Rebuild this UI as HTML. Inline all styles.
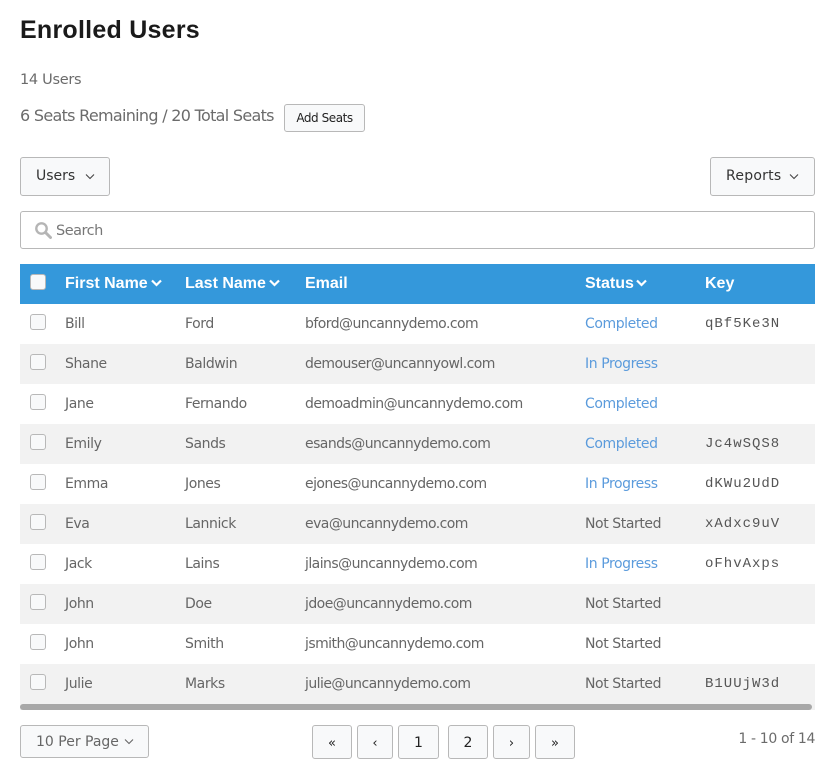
<!DOCTYPE html>
<html><head><meta charset="utf-8"><style>
html,body{margin:0;padding:0;background:#fff;}
body{position:relative;width:833px;height:775px;overflow:hidden;font-family:"DejaVu Sans","Liberation Sans",sans-serif;font-size:14px;color:#666;}
.a{position:absolute;white-space:nowrap;}
.t{position:absolute;white-space:nowrap;line-height:20px;letter-spacing:-.42px;font-size:14px;margin-top:1px;}
.e{letter-spacing:-.55px;}
.b{position:absolute;box-sizing:border-box;background:#f8f9fa;border:1px solid #b8b8b8;border-radius:3px;color:#222;text-align:center;white-space:nowrap;}
.r{position:absolute;left:20px;width:795px;height:40px;}
.g{background:#f2f2f2;}
.c{position:absolute;left:30px;width:16px;height:16px;box-sizing:border-box;background:#f8f9fa;border:1px solid #b8b8b8;border-radius:3px;}
.l{color:#5b9bdc;}
.k{font-family:"Liberation Mono",monospace;font-size:14px;letter-spacing:1px;color:#555;}
.h{position:absolute;top:274px;line-height:20px;color:#fff;font-weight:bold;font-family:"Liberation Sans",sans-serif;font-size:16px;letter-spacing:0;white-space:nowrap;}
</style></head><body>
<div class="a" style="left:20px;top:13px;font-family:'Liberation Sans',sans-serif;font-weight:bold;font-size:25px;line-height:34px;color:#1a1a1a;letter-spacing:.25px">Enrolled Users</div>
<div class="t" style="left:20px;top:69px;color:#6b6b6b;font-size:14.5px;letter-spacing:-.3px">14 Users</div>
<div class="a" style="left:20px;top:105px;font-size:16px;line-height:22px;letter-spacing:-.7px;color:#6b6b6b">6 Seats Remaining / 20 Total Seats</div>
<div class="b" style="left:284px;top:104px;width:81px;height:28px;font-size:12px;line-height:26px;letter-spacing:-.45px;color:#222">Add Seats</div>

<div class="b" style="left:20px;top:157px;width:90px;height:39px;"><span class="a" style="left:15px;top:8px;line-height:20px;letter-spacing:0;color:#333">Users</span><svg class="a" style="left:64px;top:15px" width="10" height="8"><path d="M1 1.5L5 5.5L9 1.5" fill="none" stroke="#444" stroke-width="1.1"/></svg></div>
<div class="b" style="left:710px;top:157px;width:105px;height:39px;"><span class="a" style="left:15px;top:8px;line-height:20px;letter-spacing:.25px;color:#333">Reports</span><svg class="a" style="left:78px;top:15px" width="10" height="8"><path d="M1 1.5L5 5.5L9 1.5" fill="none" stroke="#444" stroke-width="1.1"/></svg></div>

<div class="a" style="left:20px;top:211px;width:795px;height:38px;box-sizing:border-box;border:1px solid #b8b8b8;border-radius:3px;background:#fff"></div>
<svg class="a" style="left:34px;top:221px" width="18" height="18"><circle cx="7.5" cy="7.5" r="5.2" fill="none" stroke="#b5b5b5" stroke-width="2.4"/><path d="M11.5 11.5L16.5 16.5" stroke="#b5b5b5" stroke-width="3" stroke-linecap="round"/></svg>
<div class="t" style="left:56px;top:220px;color:#777;font-size:14.5px;letter-spacing:-.5px">Search</div>

<div class="a" style="left:20px;top:264px;width:795px;height:40px;background:#3498db"></div>
<div class="c" style="top:274px"></div>
<div class="h" style="left:65px">First Name</div><svg class="a" style="left:151px;top:279px" width="11" height="8"><path d="M1 1.5L5.5 6L10 1.5" fill="none" stroke="#fff" stroke-width="2.2"/></svg>
<div class="h" style="left:185px">Last Name</div><svg class="a" style="left:269px;top:279px" width="11" height="8"><path d="M1 1.5L5.5 6L10 1.5" fill="none" stroke="#fff" stroke-width="2.2"/></svg>
<div class="h" style="left:305px">Email</div>
<div class="h" style="left:585px">Status</div><svg class="a" style="left:636px;top:279px" width="11" height="8"><path d="M1 1.5L5.5 6L10 1.5" fill="none" stroke="#fff" stroke-width="2.2"/></svg>
<div class="h" style="left:705px">Key</div>

<div class="r g" style="top:344px"></div><div class="r g" style="top:424px"></div><div class="r g" style="top:504px"></div><div class="r g" style="top:584px"></div><div class="r g" style="top:664px"></div>

<div class="c" style="top:314px"></div><div class="t" style="left:65px;top:313px">Bill</div><div class="t" style="left:185px;top:313px">Ford</div><div class="t e" style="left:305px;top:313px">bford@uncannydemo.com</div><div class="t l" style="left:585px;top:313px">Completed</div><div class="t k" style="left:705px;top:313px">qBf5Ke3N</div>
<div class="c" style="top:354px"></div><div class="t" style="left:65px;top:353px">Shane</div><div class="t" style="left:185px;top:353px">Baldwin</div><div class="t e" style="left:305px;top:353px">demouser@uncannyowl.com</div><div class="t l" style="left:585px;top:353px">In Progress</div>
<div class="c" style="top:394px"></div><div class="t" style="left:65px;top:393px">Jane</div><div class="t" style="left:185px;top:393px">Fernando</div><div class="t e" style="left:305px;top:393px">demoadmin@uncannydemo.com</div><div class="t l" style="left:585px;top:393px">Completed</div>
<div class="c" style="top:434px"></div><div class="t" style="left:65px;top:433px">Emily</div><div class="t" style="left:185px;top:433px">Sands</div><div class="t e" style="left:305px;top:433px">esands@uncannydemo.com</div><div class="t l" style="left:585px;top:433px">Completed</div><div class="t k" style="left:705px;top:433px">Jc4wSQS8</div>
<div class="c" style="top:474px"></div><div class="t" style="left:65px;top:473px">Emma</div><div class="t" style="left:185px;top:473px">Jones</div><div class="t e" style="left:305px;top:473px">ejones@uncannydemo.com</div><div class="t l" style="left:585px;top:473px">In Progress</div><div class="t k" style="left:705px;top:473px">dKWu2UdD</div>
<div class="c" style="top:514px"></div><div class="t" style="left:65px;top:513px">Eva</div><div class="t" style="left:185px;top:513px">Lannick</div><div class="t e" style="left:305px;top:513px">eva@uncannydemo.com</div><div class="t" style="left:585px;top:513px">Not Started</div><div class="t k" style="left:705px;top:513px">xAdxc9uV</div>
<div class="c" style="top:554px"></div><div class="t" style="left:65px;top:553px">Jack</div><div class="t" style="left:185px;top:553px">Lains</div><div class="t e" style="left:305px;top:553px">jlains@uncannydemo.com</div><div class="t l" style="left:585px;top:553px">In Progress</div><div class="t k" style="left:705px;top:553px">oFhvAxps</div>
<div class="c" style="top:594px"></div><div class="t" style="left:65px;top:593px">John</div><div class="t" style="left:185px;top:593px">Doe</div><div class="t e" style="left:305px;top:593px">jdoe@uncannydemo.com</div><div class="t" style="left:585px;top:593px">Not Started</div>
<div class="c" style="top:634px"></div><div class="t" style="left:65px;top:633px">John</div><div class="t" style="left:185px;top:633px">Smith</div><div class="t e" style="left:305px;top:633px">jsmith@uncannydemo.com</div><div class="t" style="left:585px;top:633px">Not Started</div>
<div class="c" style="top:674px"></div><div class="t" style="left:65px;top:673px">Julie</div><div class="t" style="left:185px;top:673px">Marks</div><div class="t e" style="left:305px;top:673px">julie@uncannydemo.com</div><div class="t" style="left:585px;top:673px">Not Started</div><div class="t k" style="left:705px;top:673px">B1UUjW3d</div>

<div class="a" style="left:20px;top:704px;width:795px;height:6px;background:#f1f1f1"></div>
<div class="a" style="left:20px;top:704px;width:792px;height:6px;background:#a8a8a8;border-radius:3px"></div>

<div class="b" style="left:20px;top:725px;width:129px;height:33px;"><span class="a" style="left:15px;top:6px;line-height:20px;letter-spacing:0;color:#666">10 Per Page</span><svg class="a" style="left:103px;top:12px" width="10" height="8"><path d="M1 1.5L5 5.5L9 1.5" fill="none" stroke="#666" stroke-width="1.1"/></svg></div>
<div class="b" style="left:312px;top:725px;width:40px;height:34px;line-height:36px;font-size:13px">«</div>
<div class="b" style="left:357px;top:725px;width:36px;height:34px;line-height:36px;font-size:13px">‹</div>
<div class="b" style="left:398px;top:725px;width:41px;height:34px;line-height:34px;font-size:14px">1</div>
<div class="b" style="left:448px;top:725px;width:40px;height:34px;line-height:34px;font-size:14px">2</div>
<div class="b" style="left:493px;top:725px;width:37px;height:34px;line-height:36px;font-size:13px">›</div>
<div class="b" style="left:535px;top:725px;width:40px;height:34px;line-height:36px;font-size:13px">»</div>
<div class="t" style="right:18px;top:728px;color:#6b6b6b;letter-spacing:-.35px">1 - 10 of 14</div>
</body></html>
